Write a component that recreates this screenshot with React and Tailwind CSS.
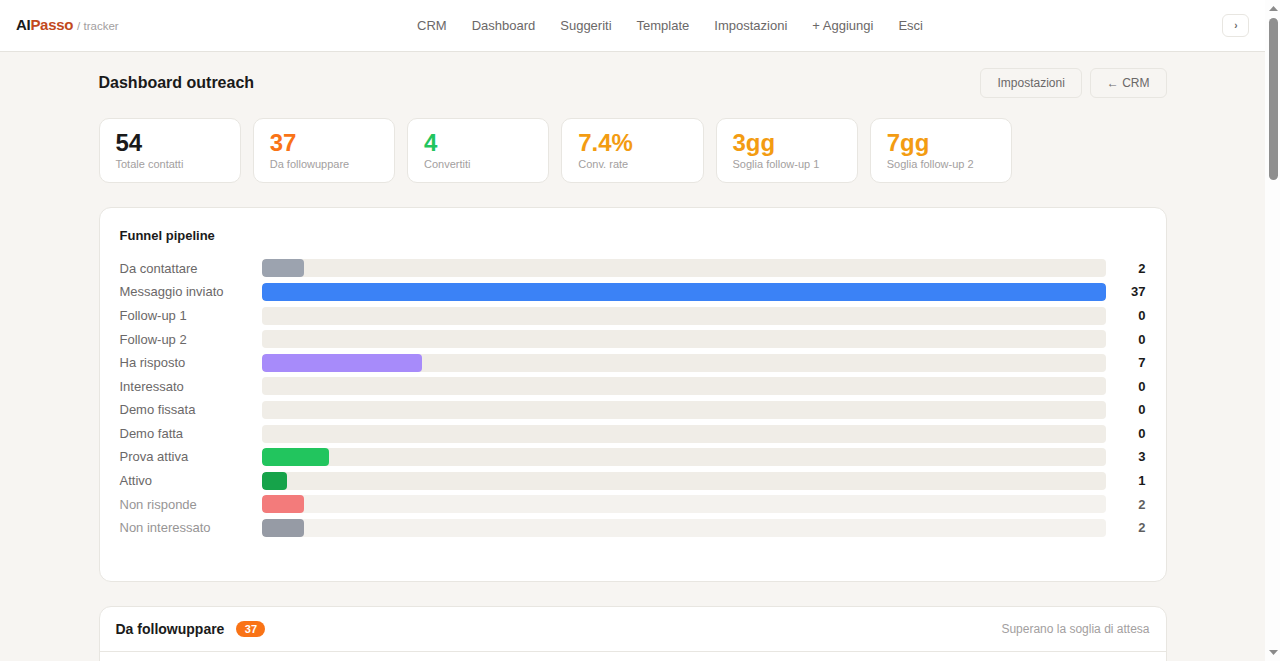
const NAV = ["CRM", "Dashboard", "Suggeriti", "Template", "Impostazioni", "+ Aggiungi", "Esci"];

const STATS = [
  { value: "54", label: "Totale contatti", color: "text-[#1a1a1a]" },
  { value: "37", label: "Da followuppare", color: "text-[#f97316]" },
  { value: "4", label: "Convertiti", color: "text-[#22c55e]" },
  { value: "7.4%", label: "Conv. rate", color: "text-[#f39c12]" },
  { value: "3gg", label: "Soglia follow-up 1", color: "text-[#f39c12]" },
  { value: "7gg", label: "Soglia follow-up 2", color: "text-[#f39c12]" },
];

const FUNNEL = [
  { label: "Da contattare", count: 2, bar: "bg-[#9ca3af]" },
  { label: "Messaggio inviato", count: 37, bar: "bg-[#3b82f6]" },
  { label: "Follow-up 1", count: 0, bar: "bg-[#f59e0b]" },
  { label: "Follow-up 2", count: 0, bar: "bg-[#f97316]" },
  { label: "Ha risposto", count: 7, bar: "bg-[#a78bfa]" },
  { label: "Interessato", count: 0, bar: "bg-[#8b5cf6]" },
  { label: "Demo fissata", count: 0, bar: "bg-[#06b6d4]" },
  { label: "Demo fatta", count: 0, bar: "bg-[#0891b2]" },
  { label: "Prova attiva", count: 3, bar: "bg-[#22c55e]" },
  { label: "Attivo", count: 1, bar: "bg-[#16a34a]" },
  { label: "Non risponde", count: 2, bar: "bg-[#ef4444]", muted: true },
  { label: "Non interessato", count: 2, bar: "bg-[#6b7280]", muted: true },
];

function StatCard({ value, label, color }) {
  return (
    <div className="w-[142.25px] h-[65px] shrink-0 bg-white border border-[#e8e6e1] rounded-[10px] px-4 pt-[10px]">
      <div className={`text-[24px] leading-[28px] font-bold ${color}`}>{value}</div>
      <div className="text-[11px] leading-[14px] text-[#a3a0a0]">{label}</div>
    </div>
  );
}

function FunnelRow({ label, count, bar, muted }) {
  return (
    <div className={`flex items-center h-[18px] ${muted ? "opacity-70" : ""}`}>
      <div className="w-[142px] shrink-0 text-[13px] text-[#6b6868]">{label}</div>
      <div className="flex-1 h-[18px] rounded-[4px] bg-[#f0ede7] overflow-hidden">
        {count > 0 && (
          <div className={`h-full rounded-[4px] ${bar}`} style={{ width: `${Math.round((count / 37) * 100)}%` }} />
        )}
      </div>
      <div className="w-[40px] shrink-0 text-right text-[13px] font-bold text-[#1a1a1a]">{count}</div>
    </div>
  );
}

function Scrollbar() {
  return (
    <div className="w-[15px] shrink-0 bg-[#fdfdfd] flex flex-col items-center justify-between py-[6px] pl-[2px] pr-[1px]">
      <svg width="9" height="5" viewBox="0 0 9 5" className="shrink-0">
        <path d="M4.5 0 9 5H0z" fill="#8a8a8a" />
      </svg>
      <div className="w-[9px] flex-1 mt-[7px] mb-[469px]">
        <div className="h-[162px] rounded-full bg-[#8f8f8f]" />
      </div>
      <svg width="9" height="5" viewBox="0 0 9 5" className="shrink-0">
        <path d="M0 0h9L4.5 5z" fill="#8a8a8a" />
      </svg>
    </div>
  );
}

export default function App() {
  return (
    <div className="h-screen flex overflow-hidden bg-[#f7f5f2] font-['Liberation_Sans',Arial,sans-serif] text-[#1a1a1a]">
      <div className="flex-1 min-w-0 overflow-hidden">
        <header className="h-[52px] bg-white border-b border-[#e5e3de] flex items-center justify-between px-4">
          <div className="w-[102px] flex items-baseline whitespace-nowrap">
            <span className="text-[15px] font-bold tracking-[-0.3px]">
              AI<span className="text-[#c2491d]">Passo</span>
            </span>
            <span className="ml-1 text-[11.5px] text-[#a3a0a0]">/ tracker</span>
          </div>
          <nav className="flex items-center gap-[25px] text-[13px] text-[#6b6868]">
            {NAV.map((item) => (
              <a key={item}>{item}</a>
            ))}
          </nav>
          <button className="w-[27px] h-[23px] pl-[1px] bg-white border border-[#e8e6e1] rounded-[6px] text-[10px] font-bold leading-none text-[#6b6868]">
            ›
          </button>
        </header>

        <main className="max-w-[1100px] mx-auto px-4 pt-4 pb-10">
          <div className="flex items-center justify-between h-[30px] mb-5">
            <h1 className="text-[16px] font-bold">Dashboard outreach</h1>
            <div className="flex gap-2">
              <button className="h-[30px] px-4 border border-[#e8e6e1] rounded-[6px] text-[12px] text-[#6b6868]">
                Impostazioni
              </button>
              <button className="h-[30px] px-4 border border-[#e8e6e1] rounded-[6px] text-[12px] text-[#6b6868]">
                ← CRM
              </button>
            </div>
          </div>

          <div className="flex gap-3 mb-6">
            {STATS.map((s) => (
              <StatCard key={s.label} {...s} />
            ))}
          </div>

          <section className="h-[375px] mb-6 bg-white border border-[#e8e6e1] rounded-[12px] p-5">
            <h2 className="text-[13px] leading-[16px] font-bold mb-[15.48px]">Funnel pipeline</h2>
            <div className="flex flex-col gap-[5.6px]">
              {FUNNEL.map((row) => (
                <FunnelRow key={row.label} {...row} />
              ))}
            </div>
          </section>

          <section className="bg-white border border-[#e8e6e1] rounded-[12px]">
            <div className="h-[45px] flex items-center justify-between px-4 border-b border-[#e8e6e1]">
              <div className="flex items-center gap-3">
                <h2 className="text-[14px] font-bold">Da followuppare</h2>
                <span className="h-4 px-[8.4px] flex items-center rounded-full bg-[#f97316] text-white text-[11px] font-bold">37</span>
              </div>
              <span className="text-[12px] text-[#a3a0a0]">Superano la soglia di attesa</span>
            </div>
            <div className="h-[300px]" />
          </section>
        </main>
      </div>
      <Scrollbar />
    </div>
  );
}
